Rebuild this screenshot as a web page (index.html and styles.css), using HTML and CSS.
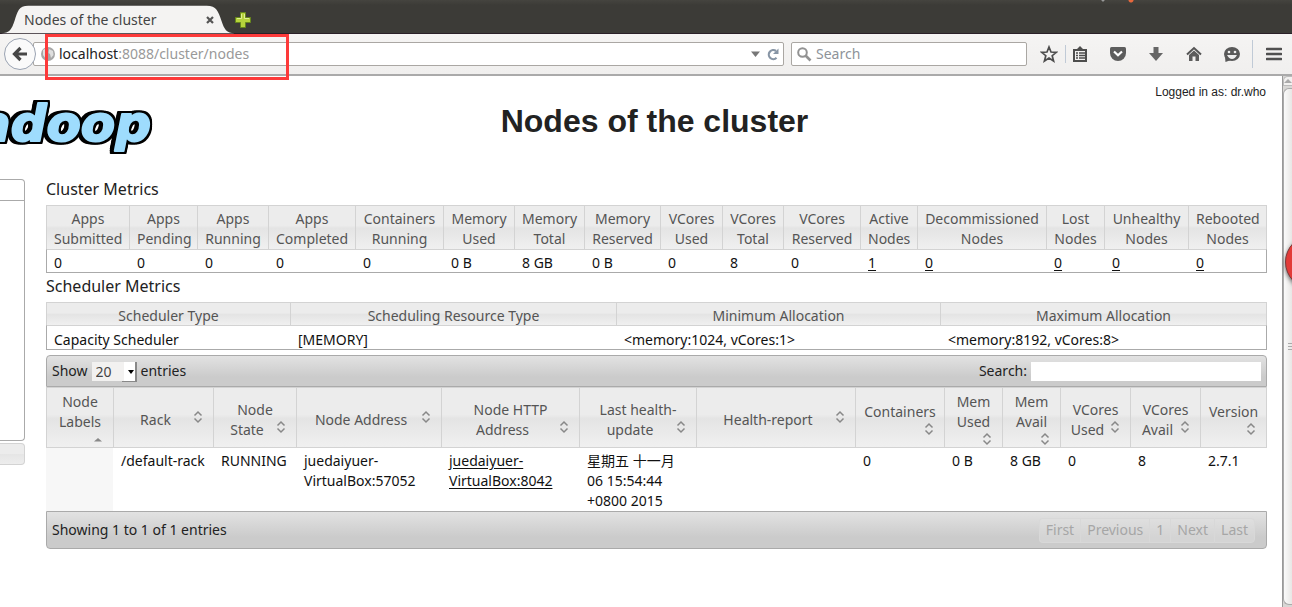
FILE: index.html
```html
<!DOCTYPE html>
<html lang="en">
<head>
<meta charset="utf-8">
<title>Nodes of the cluster</title>
<link rel="stylesheet" href="styles.css">
</head>
<body>
<div class="window">
  <header class="chrome">
    <div class="tabstrip">
      <div class="tab">
        <svg class="tab-shape" width="240" height="28" viewBox="0 0 240 28" aria-hidden="true"><path d="M0 28C9 28 11 24 14 15C17 6 18 0 28 0H211C221 0 223 6 226 15C229 24 231 28 240 28Z" fill="#f4f3f2"/></svg>
        <span class="tab-title">Nodes of the cluster</span>
        <button class="tab-close" aria-label="Close tab"><svg width="8" height="8" viewBox="0 0 8 8"><path d="M1 1L7 7M7 1L1 7" stroke="#555" stroke-width="2.2"/></svg></button>
      </div>
      <button class="tab-new" aria-label="New tab"><svg width="16" height="16" viewBox="0 0 16 16"><path d="M5.500.5h5v5h5v5h-5v5h-5v-5h-5v-5h5z" fill="#b6d33c" stroke="#66861c"/><path d="M6.500 2v4.500H2M9.500 2v4.500H14" fill="none" stroke="#e0ef92"/></svg></button>
    </div>
    <div class="toolbar">
      <button class="back" aria-label="Back"><svg width="16" height="16" viewBox="0 0 16 16"><path d="M15 8H4M8.500 2L2.500 8L8.500 14" fill="none" stroke="#474747" stroke-width="3.200"/></svg></button>
      <div class="urlbar">
        <svg class="globe" width="14" height="14" viewBox="0 0 14 14"><circle cx="7" cy="7" r="7" fill="#a6a6a6"/><path d="M2 3L6 1L6.500 4L4 6L6 9L5 12L2 8ZM8 2L12 4L12.500 8L10 11L9 7L7.500 6Z" fill="#dedede"/></svg>
        <div class="url"><span class="host">localhost</span>:8088/cluster/nodes</div>
        <svg width="9" height="6" viewBox="0 0 9 6"><path d="M0 .5H9L4.500 6Z" fill="#777"/></svg>
        <button class="reload" aria-label="Reload"><svg width="12" height="13" viewBox="0 0 12 13"><path d="M9.500 9.800A4.500 4.500 0 1 1 9 3" fill="none" stroke="#8795a5" stroke-width="2.200"/><path d="M11.500.5V6H6Z" fill="#8795a5"/></svg></button>
      </div>
      <label class="searchbar"><svg width="15" height="15" viewBox="0 0 15 15"><circle cx="5.500" cy="5.500" r="4.300" fill="none" stroke="#929292" stroke-width="2"/><path d="M8.500 8.500L13.500 13.500" stroke="#929292" stroke-width="2.600"/></svg><input type="text" placeholder="Search" aria-label="Search the web"></label>
      <nav class="tools">
        <button aria-label="Bookmark"><svg width="18" height="18" viewBox="0 0 18 18"><path d="M9 2L11 7L16.300 7.300L12.200 10.700L13.600 16L9 13L4.400 16L5.800 10.700L1.700 7.300L7 7Z" fill="none" stroke="#4d4d4d" stroke-width="1.700"/></svg></button>
        <button class="split" aria-label="Bookmarks list"><svg width="16" height="16" viewBox="0 0 16 16"><path d="M2 4H14V15H2ZM5.500 4L8 1.500L10.500 4" fill="none" stroke="#4d4d4d" stroke-width="2"/><path d="M4 7H6M7 7H13M4 9.500H6M7 9.500H13M4 12H6M7 12H13" stroke="#4d4d4d" stroke-width="1.300"/></svg></button>
        <button aria-label="Pocket"><svg width="18" height="16" viewBox="0 0 18 16"><path d="M2.500 1H15.500Q17 1 17 2.500V7A8 8 0 0 1 1 7V2.500Q1 1 2.500 1Z" fill="#5d5d5d"/><path d="M5 5.500L9 9.300L13 5.500" fill="none" stroke="#fff" stroke-width="2.200"/></svg></button>
        <button aria-label="Downloads"><svg width="16" height="16" viewBox="0 0 16 16"><path d="M5.500 1H10.500V7H15L8 15L1 7H5.500Z" fill="#666"/></svg></button>
        <button aria-label="Home"><svg width="16" height="16" viewBox="0 0 16 16"><path d="M1 8.500L8 2L15 8.500" fill="none" stroke="#555" stroke-width="2"/><path d="M3 9L8 4.500L13 9V15H9.500V10.500H6.500V15H3Z" fill="#5d5d5d"/></svg></button>
        <button aria-label="Chat"><svg width="18" height="17" viewBox="0 0 18 17"><ellipse cx="9" cy="8" rx="8" ry="7" fill="#595959"/><path d="M2 11L2.500 16L8 14Z" fill="#595959"/><circle cx="6" cy="6" r="1.300" fill="#eee"/><circle cx="12" cy="6" r="1.300" fill="#eee"/><path d="M4 9H14Q12 13 9 13T4 9Z" fill="#eee"/></svg></button>
        <button class="menu" aria-label="Menu"><svg width="16" height="14" viewBox="0 0 16 14"><path d="M1 2H15M1 7H15M1 12H15" stroke="#505050" stroke-width="2.600" stroke-linecap="round"/></svg></button>
      </nav>
    </div>
    <div class="highlight"></div>
  </header>

  <div class="viewport">
    <div class="page">
      <div class="banner">
        <svg class="logo" width="160" height="62" viewBox="0 0 160 62" role="img" aria-label="hadoop"><text class="logo-text" x="151" y="46" text-anchor="end">adoop</text></svg>
        <h1>Nodes of the cluster</h1>
        <div class="login">Logged in as: dr.who</div>
      </div>
      <div class="columns">
        <aside class="sidebar">
          <div class="panel-head"></div>
          <div class="panel-body"></div>
          <div class="panel-tools"></div>
        </aside>
        <main>
          <h2>Cluster Metrics</h2>
          <table class="metrics">
            <colgroup><col class="w83"><col class="w68"><col class="w71"><col class="w87"><col class="w88"><col class="w71"><col class="w70"><col class="w76"><col class="w62"><col class="w61"><col class="w77"><col class="w57"><col><col class="w58"><col class="w84"><col class="w79"></colgroup>
            <thead><tr><th>Apps Submitted</th><th>Apps Pending</th><th>Apps Running</th><th>Apps Completed</th><th>Containers Running</th><th>Memory Used</th><th>Memory Total</th><th>Memory Reserved</th><th>VCores Used</th><th>VCores Total</th><th>VCores Reserved</th><th>Active Nodes</th><th>Decommissioned Nodes</th><th>Lost Nodes</th><th>Unhealthy Nodes</th><th>Rebooted Nodes</th></tr></thead>
            <tbody><tr><td>0</td><td>0</td><td>0</td><td>0</td><td>0</td><td>0 B</td><td>8 GB</td><td>0 B</td><td>0</td><td>8</td><td>0</td><td><a href="#">1</a></td><td><a href="#">0</a></td><td><a href="#">0</a></td><td><a href="#">0</a></td><td><a href="#">0</a></td></tr></tbody>
          </table>
          <h2>Scheduler Metrics</h2>
          <table class="metrics scheduler">
            <colgroup><col class="w244"><col class="w326"><col class="w324"><col></colgroup>
            <thead><tr><th>Scheduler Type</th><th>Scheduling Resource Type</th><th>Minimum Allocation</th><th>Maximum Allocation</th></tr></thead>
            <tbody><tr><td>Capacity Scheduler</td><td>[MEMORY]</td><td>&lt;memory:1024, vCores:1&gt;</td><td>&lt;memory:8192, vCores:8&gt;</td></tr></tbody>
          </table>

          <section class="datatable">
            <div class="bar bar-top">
              <label class="length">Show <span class="select"><select><option>20</option><option>40</option><option>60</option></select></span> entries</label>
              <label class="filter">Search: <input type="text"></label>
            </div>
            <table class="nodes">
              <colgroup><col class="w67"><col class="w100"><col class="w83"><col class="w145"><col class="w138"><col class="w117"><col><col class="w89"><col class="w58"><col class="w58"><col class="w70"><col class="w70"><col class="w67"></colgroup>
              <thead><tr>
                <th><div>Node Labels<i class="sort"><svg width="16" height="16"><path d="M4 9.500L8 6L12 9.500Z" fill="#888"/></svg></i></div></th>
                <th><div>Rack<i class="sort"><svg width="16" height="16"><use href="#both"/></svg></i></div></th>
                <th><div>Node State<i class="sort"><svg width="16" height="16"><use href="#both"/></svg></i></div></th>
                <th><div>Node Address<i class="sort"><svg width="16" height="16"><use href="#both"/></svg></i></div></th>
                <th><div>Node HTTP Address<i class="sort"><svg width="16" height="16"><use href="#both"/></svg></i></div></th>
                <th><div>Last health-update<i class="sort"><svg width="16" height="16"><use href="#both"/></svg></i></div></th>
                <th><div>Health-report<i class="sort"><svg width="16" height="16"><use href="#both"/></svg></i></div></th>
                <th><div>Containers<i class="sort"><svg width="16" height="16"><use href="#both"/></svg></i></div></th>
                <th><div>Mem Used<i class="sort"><svg width="16" height="16"><use href="#both"/></svg></i></div></th>
                <th><div>Mem Avail<i class="sort"><svg width="16" height="16"><use href="#both"/></svg></i></div></th>
                <th><div>VCores Used<i class="sort"><svg width="16" height="16"><use href="#both"/></svg></i></div></th>
                <th><div>VCores Avail<i class="sort"><svg width="16" height="16"><use href="#both"/></svg></i></div></th>
                <th><div>Version<i class="sort"><svg width="16" height="16"><use href="#both"/></svg></i></div></th>
              </tr></thead>
              <tbody><tr>
                <td class="sorted"></td><td>/default-rack</td><td>RUNNING</td><td>juedaiyuer-VirtualBox:57052</td><td><a href="#">juedaiyuer-VirtualBox:8042</a></td><td>星期五 十一月 06 15:54:44 +0800 2015</td><td></td><td>0</td><td>0 B</td><td>8 GB</td><td>0</td><td>8</td><td>2.7.1</td>
              </tr></tbody>
            </table>
            <div class="bar bar-bottom">
              <div>Showing 1 to 1 of 1 entries</div>
              <div class="pager"><button disabled>First</button><button disabled>Previous</button><button disabled>1</button><button disabled>Next</button><button disabled>Last</button></div>
            </div>
          </section>
        </main>
      </div>
    </div>
    <div class="scrollbar">
      <div class="scroll-up"><svg width="8" height="4" viewBox="0 0 8 4"><path d="M0 4L4 0L8 4Z" fill="#aaa"/></svg></div>
      <div class="thumb"><span class="grip"></span></div>
    </div>
  </div>
  <div class="bubble"></div>
</div>
<svg class="defs" width="0" height="0" aria-hidden="true"><defs><path id="both" d="M4.500 5.500L8 2L11.500 5.500M4.500 8.500L8 12L11.500 8.500" fill="none" stroke="#888" stroke-width="1.500"/></defs></svg>
</body>
</html>
```
FILE: styles.css
```css
* { box-sizing: border-box; }
body {
  margin: 0;
  background: #fff;
  color: #222;
  font-family: "Noto Sans", "Noto Sans CJK SC", sans-serif;
  font-size: 14px;
  line-height: 20px;
}
button { border: 0; padding: 0; background: none; font: inherit; }
svg { display: block; }
.defs { position: absolute; }
.window {
  position: relative;
  display: flex;
  flex-direction: column;
  min-height: 100vh;
  overflow: hidden;
}

/* Browser chrome */
.chrome { position: relative; }
.tabstrip {
  display: flex;
  align-items: flex-end;
  height: 34px;
  padding-left: 1px;
  background:
    radial-gradient(circle at 1131px 0, #e8683c 2px, transparent 3px),
    radial-gradient(circle at 1103px 0, #999 1px, transparent 2px),
    linear-gradient(#45443f, #3c3b37 5px);
  border-bottom: 1px solid #2a2028;
}
.tab {
  display: grid;
  grid-template-columns: 1fr 16px;
  align-items: center;
  width: 234px;
  height: 28px;
  padding: 1px 17px 0 23px;
  position: relative;
}
.tab-shape { position: absolute; left: 0; top: 0; width: 100%; height: 29px; }
.tab-title, .tab-close { position: relative; color: #444; }
.tab-close { display: grid; place-items: center; }
.tab-new { height: 16px; margin-bottom: 5px; }
.toolbar {
  display: flex;
  align-items: center;
  height: 42px;
  padding: 0 2px 0 4px;
  background: linear-gradient(#f5f4f3, #f0efee);
  border-bottom: 2px solid #aaa;
}
.back {
  position: relative;
  z-index: 1;
  display: grid;
  place-items: center;
  width: 32px;
  height: 32px;
  border: 1px solid #9aa3b2;
  border-radius: 50%;
  background: #fafafa;
}
.urlbar, .searchbar {
  display: flex;
  align-items: center;
  height: 24px;
  background: #fff;
  border: 1px solid #aaa7a3;
  border-radius: 2px;
}
.urlbar { flex: 1; margin-left: -3px; padding: 0 4px 0 7px; }
.url { flex: 1; padding-left: 4px; color: #999; }
.host { color: #222; }
.reload { margin-left: 7px; }
.searchbar { width: 236px; margin-left: 7px; padding: 0 5px; gap: 4px; }
.searchbar input {
  flex: 1;
  min-width: 0;
  border: 0;
  padding: 0;
  background: none;
  font: inherit;
}
.searchbar input::placeholder { color: #8e9399; }
.tools { display: flex; align-items: center; margin-left: 13px; }
.tools button { display: grid; place-items: center; width: 38px; height: 28px; }
.tools button:first-child { width: 18px; }
.tools .split { width: 26px; margin: 0 8px 0 7px; border-left: 1px solid #c0cad6; height: 18px; padding-left: 3px; }
.tools .menu { width: 38px; margin-left: 1px; border-left: 1px solid #c0cad6; padding-left: 5px; }
.highlight {
  position: absolute;
  z-index: 2;
  left: 45px;
  top: 34px;
  width: 244px;
  height: 46px;
  border: 3px solid #fd3a3a;
}

/* Page */
.viewport { display: flex; flex: 1; }
.page { flex: 1; min-width: 0; padding-right: 15px; }
.banner { display: grid; grid-template-columns: 180px 1fr 138px; height: 100px; }
.logo { margin-top: 19px; }
.logo-text {
  font: italic bold 50px "DejaVu Sans", sans-serif;
  fill: #9edcfd;
  stroke: #9edcfd;
  stroke-width: 2px;
  stroke-linejoin: round;
  filter: drop-shadow(2px 0 0 #000) drop-shadow(-4px 0 0 #000) drop-shadow(0 2px 0 #000) drop-shadow(0 -2px 0 #000);
}
h1 {
  margin: 26px 0 0;
  font: bold 32px/38px "Liberation Sans", Arial, sans-serif;
  text-align: center;
}
.login {
  padding: 6px 1px 0 0;
  font-family: "Liberation Sans", Arial, sans-serif;
  font-size: 12px;
  text-align: right;
  white-space: nowrap;
}
.columns { display: flex; align-items: flex-start; gap: 21px; }
.sidebar { width: 25px; padding-top: 3px; }
.panel-head {
  height: 22px;
  border: 1px solid #aaa;
  border-left: 0;
  border-radius: 0 4px 0 0;
}
.panel-body {
  height: 240px;
  border: 1px solid #aaa;
  border-width: 0 1px 1px 0;
  border-radius: 0 0 4px 0;
}
.panel-tools {
  height: 22px;
  margin-top: 2px;
  border: 1px solid #d3d3d3;
  border-left: 0;
  border-radius: 0 4px 4px 0;
  background: linear-gradient(#ececec 50%, #e5e5e5 50%, #ededed);
}
main { flex: 1; min-width: 0; }
h2 { margin: 0; padding-top: 2px; height: 29px; font-size: 16px; font-weight: 400; line-height: 22px; }

table { width: 100%; table-layout: fixed; border-collapse: separate; border-spacing: 0; }
th {
  border: 1px solid #d3d3d3;
  border-width: 1px 0 0 1px;
  background: linear-gradient(#ececec 45%, #e4e4e4 52%, #f0f0f0);
  color: #555;
  font-weight: 400;
}
th:last-child { border-right-width: 1px; }
td { padding: 3px 7px 0 8px; text-align: left; vertical-align: top; color: #111; }
td a { color: #111; text-underline-offset: 2px; }
.metrics th { padding: 3px 7px 0; }
.metrics td {
  border: solid #aaa;
  border-width: 1px 0;
  border-top-color: #d3d3d3;
  padding: 4px 7px 0 8px;
  line-height: 18px;
}
.metrics td:first-child { border-left: 1px solid #aaa; padding-left: 7px; }
.metrics td:last-child { border-right: 1px solid #aaa; }
.metrics.scheduler th { padding: 4px 7px 0; line-height: 18px; }
.metrics.scheduler td { padding-top: 5px; }

.w57 { width: 57px; }
.w58 { width: 58px; }
.w61 { width: 61px; }
.w62 { width: 62px; }
.w67 { width: 67px; }
.w68 { width: 68px; }
.w70 { width: 70px; }
.w71 { width: 71px; }
.w76 { width: 76px; }
.w77 { width: 77px; }
.w79 { width: 79px; }
.w83 { width: 83px; }
.w84 { width: 84px; }
.w87 { width: 87px; }
.w88 { width: 88px; }
.w89 { width: 89px; }
.w100 { width: 100px; }
.w117 { width: 117px; }
.w138 { width: 138px; }
.w145 { width: 145px; }
.w244 { width: 244px; }
.w324 { width: 324px; }
.w326 { width: 326px; }

/* Data table */
.datatable { margin-top: 5px; }
.bar {
  display: flex;
  align-items: center;
  justify-content: space-between;
  padding: 0 5px;
  border: 1px solid #aaa;
  background: linear-gradient(#e2e2e2, #cbcbcb 70%);
}
.bar-top { height: 32px; border-radius: 4px 4px 0 0; }
.bar-bottom { height: 38px; padding-right: 11px; border-radius: 0 0 4px 4px; }
.length, .filter { display: flex; align-items: center; gap: 4px; }
.select { position: relative; display: flex; }
.select select {
  appearance: none;
  width: 45px;
  height: 19px;
  padding: 0 4px;
  border: 0;
  border-radius: 0;
  background: linear-gradient(90deg, #f2f1f0 32px, #fff 32px);
  color: #444;
  font: inherit;
  line-height: 19px;
}
.select::after {
  content: "";
  position: absolute;
  right: 3px;
  top: 8px;
  border: 3px solid transparent;
  border-top: 4px solid #000;
}
.select::before {
  content: "";
  position: absolute;
  right: 0;
  top: 0;
  width: 13px;
  height: 19px;
  border: solid #888;
  border-width: 0 2px 1px 0;
  pointer-events: none;
}
.filter input { width: 230px; height: 19px; border: 0; padding: 0 3px; background: #fff; font: inherit; }
.nodes th { padding: 4px 7px 0; border-bottom-width: 1px; }
.nodes th div { display: flow-root; }
.sort { float: right; width: 16px; height: 15px; }
.sorted { background: #f7f7f7; }
.pager { display: flex; }
.pager button {
  height: 25px;
  padding: 0 6px;
  border: 1px solid #d8d8d8;
  border-right-width: 0;
  background: rgba(230, 230, 230, .35);
  color: #a6a6a6;
}
.pager button:first-child { border-radius: 4px 0 0 4px; }
.pager button:last-child { border-right-width: 1px; border-radius: 0 4px 4px 0; }

/* Scrollbar */
.scrollbar {
  display: flex;
  flex-direction: column;
  gap: 2px;
  width: 10px;
  padding-bottom: 2px;
  border-left: 1px solid #999;
  background: #d8d7d5;
}
.scroll-up {
  display: grid;
  place-items: center;
  height: 10px;
  border: 1px solid #bbb;
  border-right: 0;
  border-radius: 5px 0 0 0;
  background: #f2f1f0;
}
.thumb {
  display: grid;
  place-items: center end;
  flex: 1;
  border: 1px solid #aaa;
  border-right: 0;
  border-radius: 6px 0 0 6px;
  background: linear-gradient(90deg, #fafafa, #e8e7e5);
}
.grip { width: 4px; height: 7px; background: repeating-linear-gradient(#aaa 0 1px, transparent 1px 3px); }
.bubble {
  position: absolute;
  left: calc(100% - 7px);
  top: 235px;
  width: 54px;
  height: 54px;
  border: 1px solid #7a3a3a;
  border-radius: 50%;
  background: #e23b38;
  box-shadow: 0 2px 4px #666;
}
```
